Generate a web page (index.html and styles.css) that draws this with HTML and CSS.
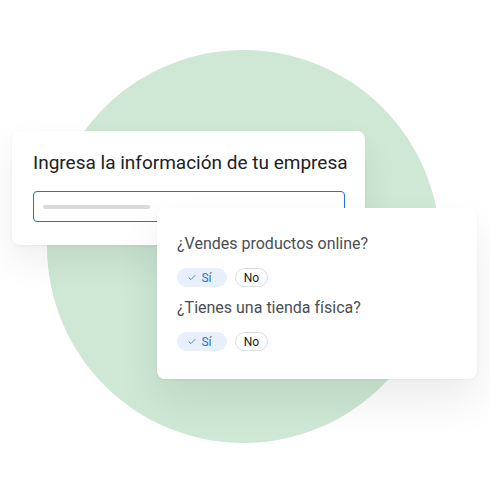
FILE: index.html
```
<!DOCTYPE html>
<html lang="es">
<head>
<meta charset="utf-8">
<link rel="stylesheet" href="styles.css">
</head>
<body>
<div class="stage">
  <div class="circle"></div>
  <div class="card card-info">
    <h1 class="title">Ingresa la información de tu empresa</h1>
    <div class="input"><span class="placeholder"></span></div>
  </div>
  <div class="card card-questions">
    <div class="question">
      <p class="q-text">¿Vendes productos online?</p>
      <div class="chips">
        <span class="chip chip-on"><svg class="check" viewBox="0 0 10 8" width="8" height="7"><path d="M1 4.2 L3.6 6.6 L9 1.2" fill="none" stroke="#1a73e8" stroke-width="1.1"/></svg>Sí</span>
        <span class="chip chip-off">No</span>
      </div>
    </div>
    <div class="question">
      <p class="q-text">¿Tienes una tienda física?</p>
      <div class="chips">
        <span class="chip chip-on"><svg class="check" viewBox="0 0 10 8" width="8" height="7"><path d="M1 4.2 L3.6 6.6 L9 1.2" fill="none" stroke="#1a73e8" stroke-width="1.1"/></svg>Sí</span>
        <span class="chip chip-off">No</span>
      </div>
    </div>
  </div>
</div>
</body>
</html>
```
FILE: styles.css
```
* { box-sizing: border-box; }
html, body { margin: 0; padding: 0; background: #ffffff; }
body { font-family: Roboto, "Noto Sans", Arial, sans-serif; }
.stage {
  position: relative;
  width: 490px;
  height: 490px;
  overflow: hidden;
  padding: 131px 0 0 12px;
}
.circle {
  position: absolute;
  left: 47px;
  top: 50px;
  width: 393px;
  height: 393px;
  border-radius: 50%;
  background: #cee8d5;
}
.card {
  background: #ffffff;
  border-radius: 8px;
  box-shadow: 0 1px 3px rgba(0,0,0,0.05), 0 16px 36px rgba(0,0,0,0.07);
}
.card-info {
  position: relative;
  width: 353px;
  height: 114px;
  padding: 20px 20px 0 21px;
}
.title {
  margin: 0;
  font-weight: 400;
  font-size: 19px;
  line-height: 24px;
  color: #202124;
  white-space: nowrap;
}
.input {
  margin-top: 16px;
  width: 312px;
  height: 31px;
  border: 1px solid #1a73e8;
  border-radius: 4px;
  display: flex;
  align-items: center;
  padding-left: 9px;
}
.placeholder {
  display: block;
  width: 107px;
  height: 4px;
  border-radius: 2px;
  background: #dadada;
}
.card-questions {
  position: absolute;
  left: 157px;
  top: 208px;
  width: 320px;
  height: 171px;
  padding: 25px 20px 0 20px;
  display: flex;
  flex-direction: column;
  gap: 10px;
  box-shadow: 0 1px 3px rgba(0,0,0,0.05), 0 22px 44px rgba(0,0,0,0.08);
}
.q-text {
  margin: 0;
  font-size: 16px;
  line-height: 22px;
  color: #4a4e52;
  white-space: nowrap;
}
.chips {
  margin-top: 13px;
  display: flex;
  gap: 8px;
}
.chip {
  height: 19px;
  border-radius: 10px;
  display: inline-flex;
  align-items: center;
  justify-content: center;
  font-size: 12px;
}
.chip-on {
  width: 50px;
  background: #e8f0fe;
  color: #1a73e8;
  gap: 5px;
  padding-right: 4px;
}
.chip-off {
  width: 33px;
  border: 1px solid #dadce0;
  color: #202124;
}
.check { display: block; }
```
